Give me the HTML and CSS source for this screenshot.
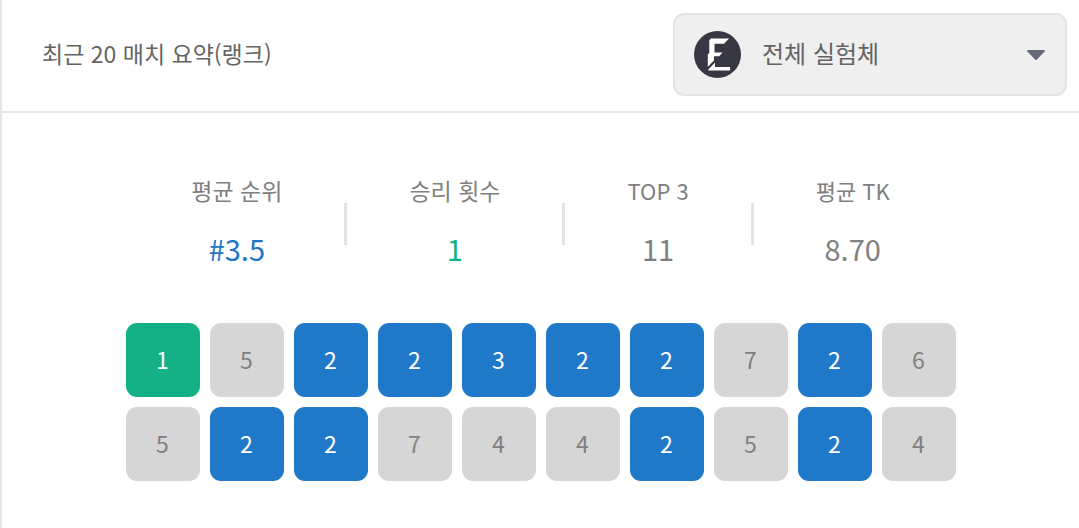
FILE: index.html
```html
<!DOCTYPE html>
<html lang="ko">
<head>
    <meta charset="UTF-8">
    <meta name="viewport" content="width=device-width, initial-scale=1.0">
    <title>최근 20 매치 요약</title>
    <link rel="stylesheet" href="styles.css">
</head>
<body>
    <section class="summary">
        <header class="summary-header">
            <h1>최근 20 매치 요약(랭크)</h1>
            <div class="character-picker">
                <svg class="picker-logo" viewBox="0 0 47 47" aria-hidden="true">
                    <circle cx="23.5" cy="23.5" r="23.5" fill="#373844"/>
                    <path fill="#fff" d="M15.3 9.2L17 7.5H35L30 12.8H20.5V21.5H28.5L25.2 25.2H20V29.5L13.8 35.8V23.5L15.3 22Z"/>
                    <path fill="#fff" d="M14.3 39.5V38.4L21 31.5V36H36V39.5Z"/>
                </svg>
                <select aria-label="실험체 선택">
                    <option>전체 실험체</option>
                </select>
                <svg class="picker-arrow" viewBox="0 0 20 12" aria-hidden="true">
                    <path fill="#666879" d="M2 1H18Q20 1 18.6 2.6L11 10.6Q10 11.6 9 10.6L1.4 2.6Q0 1 2 1Z"/>
                </svg>
            </div>
        </header>

        <dl class="stats">
            <div class="stat">
                <dt>평균 순위</dt>
                <dd class="blue">#3.5</dd>
            </div>
            <div class="stat">
                <dt>승리 횟수</dt>
                <dd class="green">1</dd>
            </div>
            <div class="stat">
                <dt class="latin">TOP 3</dt>
                <dd>11</dd>
            </div>
            <div class="stat">
                <dt class="latin">평균 TK</dt>
                <dd>8.70</dd>
            </div>
        </dl>

        <ol class="matches">
            <li class="first">1</li>
            <li>5</li>
            <li class="top">2</li>
            <li class="top">2</li>
            <li class="top">3</li>
            <li class="top">2</li>
            <li class="top">2</li>
            <li>7</li>
            <li class="top">2</li>
            <li>6</li>
            <li>5</li>
            <li class="top">2</li>
            <li class="top">2</li>
            <li>7</li>
            <li>4</li>
            <li>4</li>
            <li class="top">2</li>
            <li>5</li>
            <li class="top">2</li>
            <li>4</li>
        </ol>
    </section>
</body>
</html>
```
FILE: styles.css
```css
* {
    box-sizing: border-box;
}
body {
    margin: 0;
    background: #fff;
    color: #808080;
    font-family: "Noto Sans CJK KR", sans-serif;
    font-size: 23px;
    line-height: 34px;
}
.summary {
    min-height: 100vh;
    border-left: 2px solid #e6e6e6;
}
.summary-header {
    display: flex;
    align-items: center;
    justify-content: space-between;
    padding: 13px 12px 15px 40px;
    border-bottom: 2px solid #e6e6e6;
}
h1 {
    margin: 0;
    padding-bottom: 4px;
    color: #646464;
    font-size: 23px;
    font-weight: 400;
}
.character-picker {
    position: relative;
    width: 394px;
}
.character-picker select {
    display: block;
    width: 100%;
    height: 83px;
    padding: 0 60px 4px 87px;
    appearance: none;
    background: #efefef;
    border: 2px solid #e4e4e4;
    border-radius: 11px;
    color: #646464;
    font-family: inherit;
    font-size: 24px;
}
.picker-logo,
.picker-arrow {
    position: absolute;
    top: 0;
    bottom: 0;
    margin: auto 0;
    pointer-events: none;
}
.picker-logo {
    left: 21px;
    width: 47px;
    height: 47px;
}
.picker-arrow {
    right: 21px;
    width: 20px;
    height: 12px;
}
.stats {
    display: flex;
    justify-content: center;
    margin: 0;
    padding: 60px 20px 58px;
}
.stat {
    display: flex;
    flex-direction: column;
    gap: 24px;
    position: relative;
    padding: 0 62px;
    text-align: center;
}
.stat + .stat {
    margin-left: 3px;
}
/* divider between two stats */
.stat + .stat::before {
    content: "";
    position: absolute;
    top: 30px;
    left: -3px;
    width: 3px;
    height: 42px;
    background: #e4e4e4;
}
.latin {
    font-size: 22px;
}
dd {
    margin: 0;
    font-size: 29px;
}
.blue {
    color: #2076c4;
}
.green {
    color: #14b187;
}
.matches {
    display: grid;
    grid-template-columns: repeat(10, 74px);
    justify-content: center;
    gap: 10px;
    margin: 0;
    padding: 0 0 47px;
    list-style: none;
}
.matches li {
    display: flex;
    align-items: center;
    justify-content: center;
    height: 74px;
    padding-bottom: 2px;
    border-radius: 11px;
    background: #d6d6d6;
}
.matches .first {
    background: #14b187;
    color: #fff;
}
.matches .top {
    background: #2079c8;
    color: #fff;
}
```
